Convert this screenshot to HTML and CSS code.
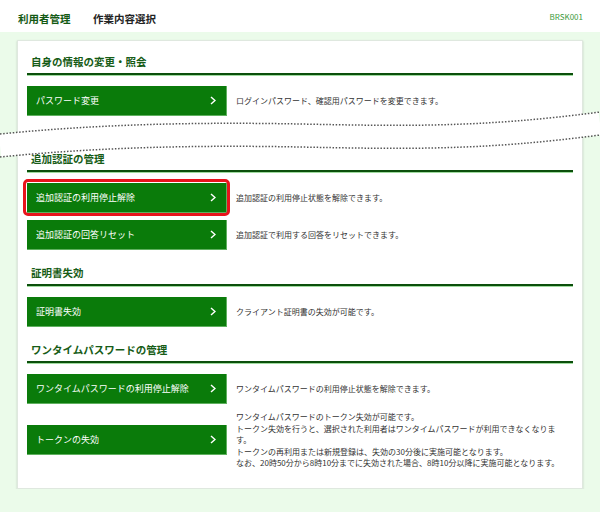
FILE: index.html
```html
<!DOCTYPE html>
<html lang="ja">

<head>
    <meta charset="UTF-8">
    <meta name="viewport" content="width=device-width, initial-scale=1.0">
    <title>作業内容選択</title>
    <link rel="stylesheet" href="styles.css">
</head>

<body>
    <header class="top-bar">
        <div class="crumbs">
            <span class="crumb-main">利用者管理</span>
            <span class="crumb-sub">作業内容選択</span>
        </div>
        <span class="screen-id">BRSK001</span>
    </header>

    <main class="content">
        <div class="panel">
            <section class="menu-section">
                <h2 class="section-title">自身の情報の変更・照会</h2>
                <div class="menu-list">
                    <div class="menu-row">
                        <a class="menu-btn" href="#">パスワード変更
                            <svg class="chevron" viewBox="0 0 6 9"><polyline points="1,1 5,4.5 1,8" /></svg></a>
                        <p class="menu-desc">ログインパスワード、確認用パスワードを変更できます。</p>
                    </div>
                </div>
            </section>

            <section class="menu-section gap-large">
                <h2 class="section-title">追加認証の管理</h2>
                <div class="menu-list">
                    <div class="menu-row">
                        <a class="menu-btn is-marked" href="#">追加認証の利用停止解除
                            <svg class="chevron" viewBox="0 0 6 9"><polyline points="1,1 5,4.5 1,8" /></svg></a>
                        <p class="menu-desc">追加認証の利用停止状態を解除できます。</p>
                    </div>
                    <div class="menu-row">
                        <a class="menu-btn" href="#">追加認証の回答リセット
                            <svg class="chevron" viewBox="0 0 6 9"><polyline points="1,1 5,4.5 1,8" /></svg></a>
                        <p class="menu-desc">追加認証で利用する回答をリセットできます。</p>
                    </div>
                </div>
            </section>

            <section class="menu-section">
                <h2 class="section-title">証明書失効</h2>
                <div class="menu-list">
                    <div class="menu-row">
                        <a class="menu-btn" href="#">証明書失効
                            <svg class="chevron" viewBox="0 0 6 9"><polyline points="1,1 5,4.5 1,8" /></svg></a>
                        <p class="menu-desc">クライアント証明書の失効が可能です。</p>
                    </div>
                </div>
            </section>

            <section class="menu-section">
                <h2 class="section-title">ワンタイムパスワードの管理</h2>
                <div class="menu-list">
                    <div class="menu-row">
                        <a class="menu-btn" href="#">ワンタイムパスワードの利用停止解除
                            <svg class="chevron" viewBox="0 0 6 9"><polyline points="1,1 5,4.5 1,8" /></svg></a>
                        <p class="menu-desc">ワンタイムパスワードの利用停止状態を解除できます。</p>
                    </div>
                    <div class="menu-row">
                        <a class="menu-btn" href="#">トークンの失効
                            <svg class="chevron" viewBox="0 0 6 9"><polyline points="1,1 5,4.5 1,8" /></svg></a>
                        <p class="menu-desc">ワンタイムパスワードのトークン失効が可能です。<br>
                            トークン失効を行うと、選択された利用者はワンタイムパスワードが利用できなくなります。<br>
                            トークンの再利用または新規登録は、失効の30分後に実施可能となります。<br>
                            なお、20時50分から8時10分までに失効された場合、8時10分以降に実施可能となります。</p>
                    </div>
                </div>
            </section>
        </div>
    </main>

    <!-- 省略の波線 -->
    <svg class="omit-band" viewBox="0 0 600 170" width="600" height="170">
        <defs>
            <path id="wave" d="M0,134 C100,124 200,122 300,124 S480,128 600,112" />
        </defs>
        <use href="#wave" class="band-fill" transform="translate(0,11.5)" />
        <use href="#wave" class="band-dots" />
        <use href="#wave" class="band-dots" transform="translate(0,23)" />
    </svg>
</body>

</html>
```

FILE: styles.css
```css
body {
    margin: 0;
    position: relative;
    font-family: "Noto Sans CJK JP", "Noto Sans", sans-serif;
    background: #ebfbea;
    color: #333;
}

.top-bar {
    height: 32px;
    display: flex;
    align-items: center;
    justify-content: space-between;
    padding: 0 17px 0 18px;
    background: #fff;
}

.crumb-main {
    font-size: 10.5px;
    font-weight: bold;
    color: #145a14;
}

.crumb-sub {
    margin-left: 19px;
    font-size: 10.5px;
    font-weight: bold;
    color: #222;
}

.screen-id {
    font-size: 8px;
    color: #3d9b3d;
}

.content {
    padding: 8px 17px 0 17px;
}

.panel {
    background: #fff;
    border: 1px solid #dfe8df;
    box-shadow: 0 1px 2px rgba(0, 0, 0, 0.18);
    padding: 14px 9px 19px 9px;
}

.menu-section {
    margin-top: 16px;
}

.menu-section:first-child {
    margin-top: 0;
}

.menu-section.gap-large {
    margin-top: 36px;
}

.section-title {
    margin: 0;
    padding: 0 4px 4px 4px;
    font-size: 10.5px;
    line-height: 14px;
    font-weight: bold;
    color: #165c16;
    border-bottom: 2px solid #0b4f0b;
    box-shadow: 0 1px 0 #9fdb9f;
}

.menu-list {
    margin-top: 11px;
    display: flex;
    flex-direction: column;
    gap: 7px;
}

.menu-row {
    display: flex;
    align-items: center;
    gap: 9px;
}

.menu-btn {
    position: relative;
    flex: 0 0 auto;
    box-sizing: border-box;
    width: 200px;
    height: 30px;
    display: flex;
    align-items: center;
    justify-content: space-between;
    padding: 0 10px 0 9px;
    background: #0a7b0a;
    border-right: 1px solid #5fb05f;
    border-bottom: 1px solid #5fb05f;
    color: #fff;
    font-size: 9px;
    text-decoration: none;
}

.menu-btn.is-marked::after {
    content: "";
    position: absolute;
    top: -4px;
    left: -4px;
    right: -4px;
    bottom: -4px;
    border: 3px solid #e8141c;
    border-radius: 5px;
}

.chevron {
    width: 6px;
    height: 9px;
    fill: none;
    stroke: #fff;
    stroke-width: 1.5;
}

.menu-desc {
    margin: 0;
    max-width: 324px;
    font-size: 8px;
    line-height: 11.5px;
    color: #333;
}

.omit-band {
    position: absolute;
    top: 0;
    left: 0;
    pointer-events: none;
}

.band-fill {
    fill: none;
    stroke: #fff;
    stroke-width: 23;
}

.band-dots {
    fill: none;
    stroke: #555;
    stroke-width: 1.5;
    stroke-dasharray: 1.5 1.7;
}
```
